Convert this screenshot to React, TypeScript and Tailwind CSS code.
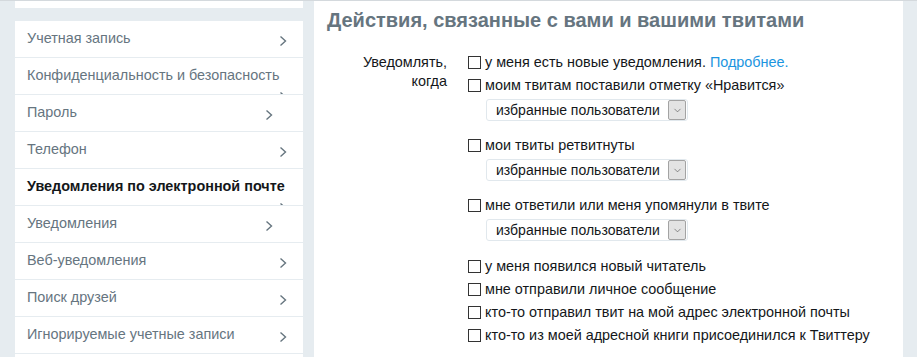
import { ChevronDown } from 'lucide-react';

const navItems = [
  { label: 'Учетная запись', chevron: 'right' },
  { label: 'Конфиденциальность и безопасность', chevron: 'wrap' },
  { label: 'Пароль', chevron: 'inner' },
  { label: 'Телефон', chevron: 'right' },
  { label: 'Уведомления по электронной почте', chevron: 'wrap', active: true },
  { label: 'Уведомления', chevron: 'inner' },
  { label: 'Веб-уведомления', chevron: 'right' },
  { label: 'Поиск друзей', chevron: 'right' },
  { label: 'Игнорируемые учетные записи', chevron: 'right' },
  { label: '', chevron: 'none' },
];

const Chevron = () => (
  <svg width="8" height="12" viewBox="0 0 8 12" className="shrink-0">
    <polyline points="1.5,1.5 6.5,6 1.5,10.5" fill="none" stroke="#66757f" strokeWidth="1.4" />
  </svg>
);

const Checkbox = () => (
  <span className="inline-block w-[13px] h-[13px] border border-[#333] bg-white shrink-0" />
);

const UserSelect = () => (
  <div className="ml-[18px] mt-[2px] flex items-center w-[202px] h-[22px] border border-[#e1e8ed] rounded-[3px] bg-white pl-[9px] pr-[1px] shrink-0">
    <span className="flex-1 text-[14px] text-[#14171a] leading-none whitespace-nowrap">избранные пользователи</span>
    <span className="flex items-center justify-center w-[18px] h-[20px] bg-[#e3e3e3] border border-[#a3a3a3] rounded-[2px]">
      <ChevronDown size={11} strokeWidth={1.4} color="#555" />
    </span>
  </div>
);

const Option = ({ children }: { children: React.ReactNode }) => (
  <label className="flex items-center gap-[4px] h-[23px] text-[14.4px] text-[#14171a] whitespace-nowrap shrink-0">
    <Checkbox />
    <span>{children}</span>
  </label>
);

export default function App() {
  return (
    <div
      className="w-[917px] h-[357px] overflow-hidden bg-[#e6ecf0] border-t border-[#d4d9dd] flex items-start"
      style={{ fontFamily: '"Liberation Sans", Arial, sans-serif' }}
    >
      <aside className="ml-[15px] w-[288px] flex flex-col shrink-0">
        <div className="h-[7px] bg-white shrink-0" />
        <div className="mt-[13px] bg-white flex flex-col shrink-0">
          {navItems.map((item, i) => (
            <div
              key={i}
              className="h-[37px] shrink-0 border-b border-[#e6ecf0] overflow-hidden pl-[12px] pr-[16px]"
            >
              {item.chevron === 'wrap' ? (
                <div className="flex flex-col">
                  <span
                    className={
                      item.active
                        ? 'h-[36px] flex items-center text-[14.4px] font-bold text-[#14171a] whitespace-nowrap'
                        : 'h-[36px] flex items-center text-[14.4px] text-[#66757f] whitespace-nowrap'
                    }
                  >
                    {item.label}
                  </span>
                  <span className="-mt-[3px] flex justify-end">
                    <Chevron />
                  </span>
                </div>
              ) : (
                <div className="h-[36px] flex items-center justify-between">
                  <span className="text-[14.4px] text-[#66757f] whitespace-nowrap">{item.label}</span>
                  {item.chevron === 'right' && (
                    <span className="mt-[3px]">
                      <Chevron />
                    </span>
                  )}
                  {item.chevron === 'inner' && (
                    <span className="mt-[3px] mr-[14px]">
                      <Chevron />
                    </span>
                  )}
                </div>
              )}
            </div>
          ))}
        </div>
      </aside>

      <main className="ml-[11px] w-[589px] h-[357px] shrink-0 bg-white pl-[13px] pt-[6px]">
        <h1 className="text-[20px] font-bold text-[#66757f] leading-[26px] whitespace-nowrap">
          Действия, связанные с вами и вашими твитами
        </h1>
        <div className="mt-[18px] flex">
          <div className="w-[120px] text-right text-[14.4px] text-[#14171a] leading-[19px] pt-[2px]">
            Уведомлять,
            <br />
            когда
          </div>
          <div className="ml-[21px] flex flex-col">
            <Option>
              у меня есть новые уведомления.{' '}
              <span className="text-[#1b95e0]">Подробнее.</span>
            </Option>
            <Option>моим твитам поставили отметку «Нравится»</Option>
            <UserSelect />
            <div className="mt-[13px]">
              <Option>мои твиты ретвитнуты</Option>
            </div>
            <UserSelect />
            <div className="mt-[13px]">
              <Option>мне ответили или меня упомянули в твите</Option>
            </div>
            <UserSelect />
            <div className="mt-[14px] flex flex-col">
              <Option>у меня появился новый читатель</Option>
              <Option>мне отправили личное сообщение</Option>
              <Option>кто-то отправил твит на мой адрес электронной почты</Option>
              <Option>кто-то из моей адресной книги присоединился к Твиттеру</Option>
            </div>
          </div>
        </div>
      </main>
    </div>
  );
}
